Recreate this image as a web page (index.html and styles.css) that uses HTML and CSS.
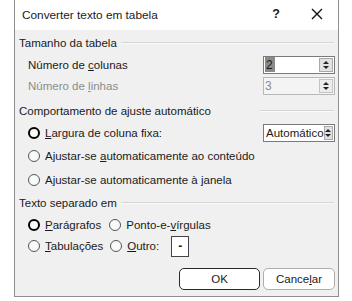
FILE: index.html
```html
<!DOCTYPE html>
<html lang="pt">
<head>
    <meta charset="UTF-8">
    <title>Converter texto em tabela</title>
    <link rel="stylesheet" href="styles.css">
</head>
<body>
    <div class="dialog">
        <div class="titlebar">
            <span class="title">Converter texto em tabela</span>
            <span class="help">?</span>
            <svg class="close" width="12" height="12" viewBox="0 0 12 12">
                <path d="M1 1 L11 11 M11 1 L1 11" stroke="#111" stroke-width="1.4"/>
            </svg>
        </div>
        <div class="body">
            <div class="group-head">
                <span>Tamanho da tabela</span>
                <span class="line"></span>
            </div>
            <div class="row h21">
                <span class="label">Número de <u>c</u>olunas</span>
                <div class="spin">
                    <div class="spin-value"><span class="sel">2</span></div>
                    <div class="spin-btns"><span class="up"></span><span class="down"></span></div>
                </div>
            </div>
            <div class="row h22 disabled">
                <span class="label">Número de <u>l</u>inhas</span>
                <div class="spin">
                    <div class="spin-value">3</div>
                    <div class="spin-btns"><span class="up"></span><span class="down"></span></div>
                </div>
            </div>

            <div class="group-head gap">
                <span>Comportamento de ajuste automático</span>
                <span class="line short"></span>
            </div>
            <div class="row h22">
                <span class="radio checked"></span>
                <span class="label"><u>L</u>argura de coluna fixa:</span>
                <div class="spin combo">
                    <div class="spin-value">Automático</div>
                    <div class="spin-btns"><span class="up"></span><span class="down"></span></div>
                </div>
            </div>
            <div class="row h23">
                <span class="radio"></span>
                <span class="label">Ajustar-se <u>a</u>utomaticamente ao conteúdo</span>
            </div>
            <div class="row h25">
                <span class="radio"></span>
                <span class="label">Ajustar-se automaticamente à <u>j</u>anela</span>
            </div>

            <div class="group-head">
                <span>Texto separado em</span>
                <span class="line"></span>
            </div>
            <div class="row h22">
                <span class="radio checked"></span>
                <span class="label w-parag"><u>P</u>arágrafos</span>
                <span class="radio"></span>
                <span class="label">Ponto-e-<u>v</u>írgulas</span>
            </div>
            <div class="row h20">
                <span class="radio"></span>
                <span class="label w-tab"><u>T</u>abulações</span>
                <span class="radio"></span>
                <span class="label"><u>O</u>utro:</span>
                <div class="other">-</div>
            </div>

            <div class="buttons">
                <button class="btn default">OK</button>
                <button class="btn">Cance<u>l</u>ar</button>
            </div>
        </div>
    </div>
</body>
</html>
```

FILE: styles.css
```css
body {
    margin: 0;
    background-color: #ffffff;
    font-family: 'Liberation Sans', Arial, sans-serif;
    font-size: 11.5px;
    color: #1a1a1a;
}
.dialog {
    margin-left: 14px;
    width: 323px;
    height: 296px;
    border: 1px solid #8e8e8e;
    border-top: none;
    background-color: #f0f0f0;
    display: flex;
    flex-direction: column;
}
.titlebar {
    height: 30px;
    background-color: #ffffff;
    display: flex;
    align-items: center;
    padding-left: 7px;
    font-size: 11.8px;
}
.title {
    flex: 1;
    margin-top: -1px;
}
.help {
    font-weight: bold;
    font-size: 12.5px;
    margin-right: 31px;
    margin-top: -2px;
}
.close {
    margin-right: 15px;
    margin-top: -2px;
}
.body {
    padding: 2px 0 0 4px;
    display: flex;
    flex-direction: column;
}
.group-head {
    height: 22px;
    display: flex;
    align-items: center;
}
.group-head.gap {
    margin-top: 3px;
}
.line {
    flex: 1;
    height: 1px;
    margin: 0 4px 0 4px;
    background-color: #d4d4d4;
    border-bottom: 1px solid #fafafa;
}
.line.short {
    flex: none;
    width: 74px;
    margin-left: auto;
}
.row {
    display: flex;
    align-items: center;
    padding-left: 9px;
}
.h20 { height: 20px; }
.h21 { height: 21px; }
.h22 { height: 22px; }
.h23 { height: 23px; }
.h25 { height: 25px; }
.label {
    flex: none;
}
.row .spin {
    margin-left: auto;
    margin-right: 3px;
}
.disabled .label {
    color: #8c8c8c;
}
.spin {
    width: 72px;
    height: 18px;
    display: flex;
    border: 1px solid #7a7a7a;
    background-color: #ffffff;
    box-sizing: border-box;
}
.spin-value {
    flex: 1;
    display: flex;
    align-items: center;
    padding-left: 1px;
    font-size: 12px;
}
.sel {
    background-color: #8a8a8a;
    padding: 1px 2px 0 1px;
    line-height: 14px;
}
.spin-btns {
    width: 12px;
    margin: 1px;
    display: flex;
    flex-direction: column;
    justify-content: center;
    align-items: center;
    gap: 2px;
    background-color: #e1e1e1;
    border: 1px solid #a9a9a9;
}
.up, .down {
    width: 0;
    height: 0;
    border-left: 3px solid transparent;
    border-right: 3px solid transparent;
}
.up {
    border-bottom: 3px solid #222;
}
.down {
    border-top: 3px solid #222;
}
.disabled .spin {
    background-color: #f4f4f4;
    border-color: #b8b8b8;
}
.disabled .spin-value {
    color: #8c8c8c;
}
.disabled .spin-btns {
    background-color: #ececec;
    border-color: #c4c4c4;
}
.combo .spin-value {
    font-size: 11.5px;
    padding-left: 2px;
}
.combo .spin-btns {
    width: 10px;
    margin: 1px 1px 1px 0;
}
.radio {
    width: 10px;
    height: 10px;
    border-radius: 50%;
    border: 1px solid #555;
    background-color: #fafafa;
    margin-right: 5px;
    flex: none;
}
.radio.checked {
    width: 8px;
    height: 8px;
    border: 2px solid #000;
}
.w-parag {
    margin-right: 8px;
}
.w-tab {
    margin-right: 7px;
}
.other {
    width: 16px;
    height: 19px;
    margin-left: 12px;
    border: 1px solid #444;
    background-color: #ffffff;
    display: flex;
    justify-content: center;
    align-items: center;
    font-weight: bold;
    font-size: 12px;
}
.buttons {
    display: flex;
    justify-content: flex-end;
    gap: 3px;
    margin-top: 12px;
    padding-right: 3px;
}
.btn {
    height: 22px;
    width: 72px;
    border: 1px solid #adadad;
    border-radius: 5px;
    background-color: #ffffff;
    font-family: 'Liberation Sans', Arial, sans-serif;
    font-size: 11.5px;
    color: #1a1a1a;
    padding: 0;
}
.btn.default {
    width: 81px;
    border-color: #2a2a2a;
}
```
